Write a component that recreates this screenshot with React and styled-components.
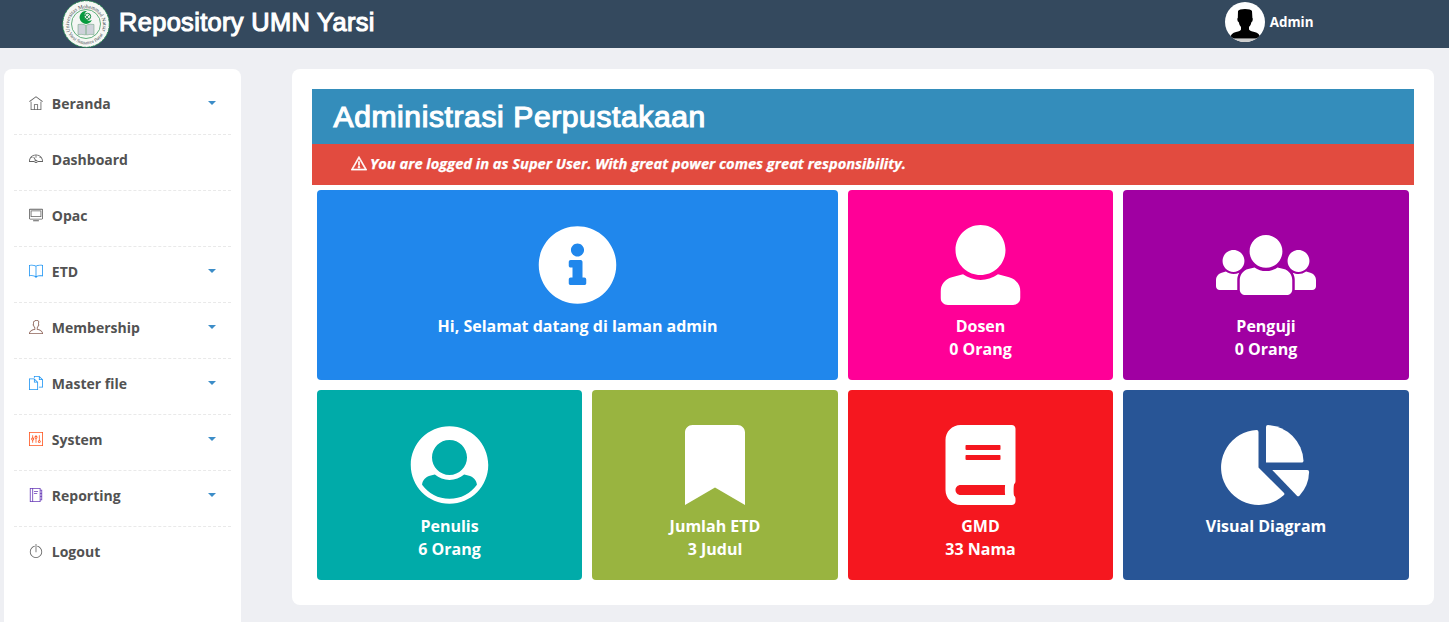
import React from 'react';
import styled, { createGlobalStyle } from 'styled-components';
import { FaInfoCircle, FaBook, FaBookmark } from 'react-icons/fa';
import {
  TfiHome, TfiDashboard, TfiDesktop, TfiBook, TfiUser, TfiFiles, TfiPanel, TfiAgenda, TfiPowerOff, TfiAlert,
} from 'react-icons/tfi';

const GlobalStyle = createGlobalStyle`
  * { box-sizing: border-box; }
  body {
    margin: 0;
    background: #eeeff3;
    font-family: 'Open Sans', sans-serif;
    overflow: hidden;
  }
`;

const Page = styled.div`
  height: 622px;
  overflow: hidden;
`;

const Header = styled.header`
  display: flex;
  justify-content: space-between;
  height: 48px;
  padding: 0 135.500px 0 62px;
  background: #34495e;
  color: #fff;
`;

const Brand = styled.div`
  display: flex;
  gap: 9px;
`;

const BrandName = styled.h1`
  margin: 8px 0 0;
  font: 400 25.4px/28px 'Liberation Sans', sans-serif;
  letter-spacing: 0.35px;
  -webkit-text-stroke: 1.1px #fff;
  white-space: nowrap;
`;

const Account = styled.div`
  display: flex;
  align-items: center;
  gap: 5px;
  height: 44px;
  font-size: 13.4px;
  font-weight: 700;
`;

const Layout = styled.div`
  display: flex;
  align-items: flex-start;
  gap: 51px;
  padding: 21px 15px 0 4px;
`;

const Sidebar = styled.nav`
  flex: none;
  width: 237px;
  height: 570px;
  padding: 10px;
  border-radius: 8px;
  background: #fff;
`;

const NavItem = styled.a`
  display: flex;
  align-items: center;
  height: 56px;
  padding: 0 15px 7px;
  color: #525252;
  font-size: 14px;
  font-weight: 700;
  border-bottom: 1px dashed ${(p) => (p.$last ? 'transparent' : '#e9e9e9')};

  svg {
    flex: none;
    width: 14px;
    height: 14px;
    margin: -1px 8.800px 0 0;
    color: ${(p) => p.$tint};
  }
`;

const Caret = styled.i`
  margin: 0 0 0 auto;
  border: 4px solid transparent;
  border-top-color: #3c8dc8;
  border-bottom: 0;
`;

const Panel = styled.main`
  flex: 1;
  height: 536px;
  padding: 20px;
  border-radius: 8px;
  background: #fff;
`;

const PanelTitle = styled.h2`
  height: 55px;
  margin: 0;
  padding: 10px 21.500px;
  background: #348dbb;
  color: #fff;
  font: 400 30px/35px 'Liberation Sans', sans-serif;
  letter-spacing: 0.62px;
  -webkit-text-stroke: 1.2px #fff;
`;

const Alert = styled.div`
  display: flex;
  align-items: center;
  gap: 3px;
  height: 41px;
  padding: 0 39px 3px;
  background: #e24b3f;
  color: #fff;
  font-size: 14.67px;
  font-style: italic;
  font-weight: 700;
  -webkit-text-stroke: 0.25px #fff;

  svg {
    width: 16px;
    height: 16px;
    stroke: #fff;
    stroke-width: 0.8;
  }
`;

const Tiles = styled.section`
  display: grid;
  grid-template-columns: 265px 246px 265px 286px;
  grid-auto-rows: 190px;
  gap: 10px;
  padding: 5px;
`;

const Tile = styled.div`
  grid-column: span ${(p) => p.$span || 1};
  display: flex;
  flex-direction: column;
  align-items: center;
  padding-top: 35px;
  border-radius: 4px;
  background: ${(p) => p.$color};
  color: #fff;
  font-size: 16px;
  font-weight: 700;
  line-height: 23px;

  > svg {
    display: block;
    width: auto;
    height: 80px;
    margin-bottom: 10px;
    transform: translateX(${(p) => (p.$oddWidth ? -0.5 : 0)}px);
  }
`;

const Logo = () => (
  <svg width="48" height="48" viewBox="0 0 48 48">
    <defs>
      <path id="ringTop" d="M8.200 31.500a17 17 0 1 1 31.600 0" />
      <path id="ringBottom" d="M6.300 33.500a20 20 0 0 0 35.400 0" />
    </defs>
    <circle cx="24" cy="24" r="23.3" fill="#f7f8f5" stroke="#278d53" strokeWidth="1" strokeDasharray="3 1" />
    <circle cx="24" cy="24" r="14.5" fill="#f5f6f4" stroke="#3a9c5c" strokeWidth=".8" />
    <text fill="#39434a" fontFamily="Liberation Serif, serif" fontSize="5.4" textLength="65" lengthAdjust="spacingAndGlyphs">
      <textPath href="#ringTop">Universitas Mohammad Natsir</textPath>
    </text>
    <text fill="#39434a" fontFamily="Liberation Serif, serif" fontSize="5" textLength="42" lengthAdjust="spacingAndGlyphs">
      <textPath href="#ringBottom">Yarsi Sumatera Barat</textPath>
    </text>
    <path d="M25 11a6.5 6.5 0 1 0 5 9 5 5 0 1 1-5-9z" fill="#079b3f" />
    <circle cx="25.5" cy="16.5" r="3.2" fill="#e6efe8" stroke="#138b42" />
    <path d="M23 19l5-5m-5 1l4 4" stroke="#138b42" strokeWidth=".8" />
    <path d="M16 24.5q4-1 7.5.5v10q-3.5-1-7.5-.5zM24.5 25q3.500-1.500 7.500-.5v10q-4-.5-7.500.5z" fill="#ced1da" stroke="#669e7b" strokeWidth=".5" />
  </svg>
);

const Avatar = () => (
  <svg width="40" height="40" viewBox="0 0 40 40">
    <defs>
      <clipPath id="avatarClip"><circle cx="20" cy="20" r="20" /></clipPath>
    </defs>
    <g clipPath="url(#avatarClip)">
      <path fill="#fff" d="M0 0h40v40H0z" />
      <path fill="#777" d="M4 35h32v2H4z" />
      <path fill="#ccc" d="M4 37h32v3H4z" />
      <path d="M13 9q1-2 7-2t7 2l.4 7q.6 0 .3 2-.3 2-1.200 2-.5 3-2.500 5v2.500q1 1.500 5.500 2.500 5 1 6 6H5q1-5 6-6 4.500-1 5-2.500V25q-1.800-2-2.300-5-1 0-1.300-2-.3-2 .4-2z" />
    </g>
  </svg>
);

const UserIcon = () => (
  <svg viewBox="0 0 512 512" fill="currentColor">
    <path d="M256 0c88.366 0 160 71.634 160 160s-71.634 160-160 160S96 248.366 96 160 167.634 0 256 0zm183.283 333.821l-71.313-17.828c-74.923 53.89-165.738 41.864-223.94 0l-71.313 17.828C29.981 344.505 0 382.903 0 426.955V464c0 26.51 21.49 48 48 48h416c26.51 0 48-21.49 48-48v-37.045c0-44.052-29.981-82.45-72.717-93.134z" />
  </svg>
);

const UsersIcon = () => (
  <svg viewBox="0 0 640 512" fill="currentColor">
    <path d="M320 64c57.99 0 105 47.01 105 105s-47.01 105-105 105-105-47.01-105-105S262.01 64 320 64zm113.463 217.366l-39.982-9.996c-49.168 35.365-108.766 27.473-146.961 0l-39.982 9.996C174.485 289.379 152 318.177 152 351.216V412c0 19.882 16.118 36 36 36h264c19.882 0 36-16.118 36-36v-60.784c0-33.039-22.485-61.837-54.537-69.85zM528 300c38.66 0 70-31.34 70-70s-31.34-70-70-70-70 31.34-70 70 31.34 70 70 70zm-416 0c38.66 0 70-31.34 70-70s-31.34-70-70-70-70 31.34-70 70 31.34 70 70 70zm24 112v-60.784c0-16.551 4.593-32.204 12.703-45.599-29.988 14.72-63.336 8.708-85.69-7.37l-26.655 6.664C14.99 310.252 0 329.452 0 351.477V392c0 13.255 10.745 24 24 24h112.169a52.417 52.417 0 0 1-.169-4zm467.642-107.09l-26.655-6.664c-27.925 20.086-60.89 19.233-85.786 7.218C499.369 318.893 504 334.601 504 351.216V412c0 1.347-.068 2.678-.169 4H616c13.255 0 24-10.745 24-24v-40.523c0-22.025-14.99-41.225-36.358-46.567z" />
  </svg>
);

const UserCircleIcon = () => (
  <svg viewBox="0 0 512 512" fill="currentColor">
    <path d="M8 256C8 119.033 119.033 8 256 8s248 111.033 248 248-111.033 248-248 248S8 392.967 8 256zm72.455 125.868C119.657 436.446 183.673 472 256 472s136.343-35.554 175.545-90.132c-3.141-26.99-22.667-49.648-49.538-56.366l-32.374-8.093C323.565 339.79 290.722 352 256 352c-35.255 0-67.799-12.578-93.634-34.591l-32.374 8.093c-26.87 6.718-46.396 29.376-49.537 56.366zM144 208c0 61.856 50.144 112 112 112s112-50.144 112-112S317.856 96 256 96s-112 50.144-112 112z" />
  </svg>
);

const PieIcon = () => (
  <svg viewBox="0 0 576 512" fill="currentColor">
    <path d="M240 272V44q0-12-12-12A240 240 0 1 0 401 450q9-8 1-16z" />
    <path d="M288 240V12q0-12 12-12A240 240 0 0 1 528 228q0 12-12 12z" />
    <path d="M328 288h224q12 0 12 12A236 236 0 0 1 502 452q-8 8-16 0z" />
  </svg>
);

const navItems = [
  { label: 'Beranda', Icon: TfiHome, tint: '#626262', menu: true },
  { label: 'Dashboard', Icon: TfiDashboard, tint: '#626262' },
  { label: 'Opac', Icon: TfiDesktop, tint: '#626262' },
  { label: 'ETD', Icon: TfiBook, tint: '#2196f3', menu: true },
  { label: 'Membership', Icon: TfiUser, tint: '#8d6358', menu: true },
  { label: 'Master file', Icon: TfiFiles, tint: '#2196f3', menu: true },
  { label: 'System', Icon: TfiPanel, tint: '#ff5722', menu: true },
  { label: 'Reporting', Icon: TfiAgenda, tint: '#673ab7', menu: true },
  { label: 'Logout', Icon: TfiPowerOff, tint: '#626262' },
];

const tiles = [
  { title: 'Hi, Selamat datang di laman admin', Icon: FaInfoCircle, color: '#2087ec', span: 2, oddWidth: true },
  { title: 'Dosen', count: '0 Orang', Icon: UserIcon, color: '#ff0097', oddWidth: true },
  { title: 'Penguji', count: '0 Orang', Icon: UsersIcon, color: '#a000a2' },
  { title: 'Penulis', count: '6 Orang', Icon: UserCircleIcon, color: '#00aba9', oddWidth: true },
  { title: 'Jumlah ETD', count: '3 Judul', Icon: FaBookmark, color: '#99b440' },
  { title: 'GMD', count: '33 Nama', Icon: FaBook, color: '#f5171f', oddWidth: true },
  { title: 'Visual Diagram', Icon: PieIcon, color: '#285596' },
];

export default function App() {
  return (
    <Page>
      <GlobalStyle />
      <Header>
        <Brand>
          <Logo />
          <BrandName>Repository UMN Yarsi</BrandName>
        </Brand>
        <Account>
          <Avatar />
          <span>Admin</span>
        </Account>
      </Header>
      <Layout>
        <Sidebar>
          {navItems.map(({ label, Icon, tint, menu }, i) => (
            <NavItem key={label} $tint={tint} $last={i === navItems.length - 1}>
              <Icon />
              <span>{label}</span>
              {menu && <Caret />}
            </NavItem>
          ))}
        </Sidebar>
        <Panel>
          <PanelTitle>Administrasi Perpustakaan</PanelTitle>
          <Alert>
            <TfiAlert />
            <span>You are logged in as Super User. With great power comes great responsibility.</span>
          </Alert>
          <Tiles>
            {tiles.map(({ title, count, Icon, color, span, oddWidth }) => (
              <Tile key={title} $color={color} $span={span} $oddWidth={oddWidth}>
                <Icon />
                <span>{title}</span>
                {count && <span>{count}</span>}
              </Tile>
            ))}
          </Tiles>
        </Panel>
      </Layout>
    </Page>
  );
}
